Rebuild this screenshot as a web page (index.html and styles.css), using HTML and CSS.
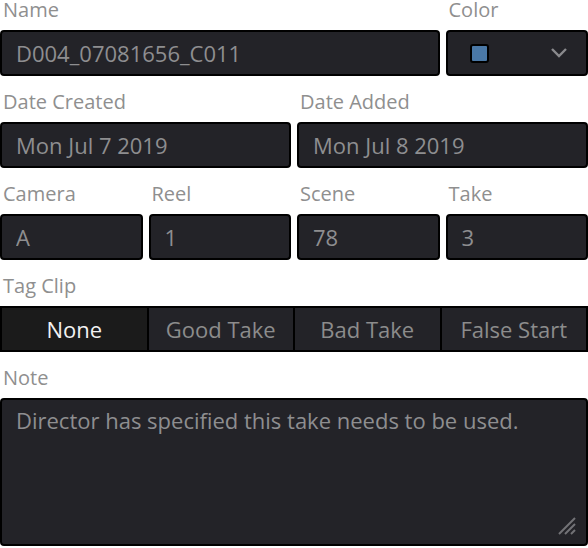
FILE: index.html
```html
<!DOCTYPE html>
<html>
<head>
<meta charset="utf-8">
<link rel="stylesheet" href="styles.css">
</head>
<body>
<form class="form">
  <div class="field span3">
    <label class="label">Name</label>
    <input class="input" value="D004_07081656_C011">
  </div>
  <div class="field">
    <label class="label">Color</label>
    <div class="input select">
      <span class="swatch"></span>
      <svg class="chev" width="18" height="12" viewBox="0 0 18 12"><path d="M2 2 L9 9 L16 2" fill="none" stroke="#8a8a8d" stroke-width="2.4"/></svg>
    </div>
  </div>
  <div class="field span2">
    <label class="label">Date Created</label>
    <input class="input" value="Mon Jul 7 2019">
  </div>
  <div class="field span2">
    <label class="label">Date Added</label>
    <input class="input" value="Mon Jul 8 2019">
  </div>
  <div class="field">
    <label class="label">Camera</label>
    <input class="input" value="A">
  </div>
  <div class="field">
    <label class="label">Reel</label>
    <input class="input" value="1">
  </div>
  <div class="field">
    <label class="label">Scene</label>
    <input class="input" value="78">
  </div>
  <div class="field">
    <label class="label">Take</label>
    <input class="input" value="3">
  </div>
  <div class="field span4">
    <label class="label">Tag Clip</label>
    <div class="seg">
      <button type="button" class="seg-btn active">None</button>
      <button type="button" class="seg-btn">Good Take</button>
      <button type="button" class="seg-btn">Bad Take</button>
      <button type="button" class="seg-btn">False Start</button>
    </div>
  </div>
  <div class="field span4">
    <label class="label">Note</label>
    <div class="area-wrap">
      <textarea class="input area">Director has specified this take needs to be used.</textarea>
      <svg class="grip" width="18" height="18" viewBox="0 0 18 18"><path d="M1 17 L17 1 M7 17 L17 7 M13 17 L17 13" fill="none" stroke="#727276" stroke-width="2"/></svg>
    </div>
  </div>
</form>
</body>
</html>
```

FILE: styles.css
```css
html, body {
  margin: 0;
  padding: 0;
  background: #ffffff;
}
body {
  font-family: "Open Sans", "Noto Sans", sans-serif;
  width: 588px;
  height: 548px;
  overflow: hidden;
}
.form {
  display: grid;
  grid-template-columns: repeat(4, 1fr);
  column-gap: 6px;
  row-gap: 16px;
  margin: 0;
}
.field {
  display: flex;
  flex-direction: column;
  min-width: 0;
}
.span2 { grid-column: span 2; }
.span3 { grid-column: span 3; }
.span4 { grid-column: span 4; }
.label {
  font-size: 20px;
  line-height: 20px;
  color: #8f8f8f;
  padding-left: 3px;
  margin-bottom: 10px;
  height: 20px;
}
.input {
  box-sizing: border-box;
  height: 46px;
  width: 100%;
  background: #232328;
  border: 2px solid #000;
  border-radius: 4px;
  color: #8e8e90;
  font-family: "Open Sans", "Noto Sans", sans-serif;
  font-size: 22px;
  padding: 0 14px;
  outline: none;
  margin: 0;
}
.select {
  display: flex;
  align-items: center;
  justify-content: space-between;
  padding: 0 18px 0 22px;
}
.swatch {
  width: 15px;
  height: 15px;
  background: #4a78a6;
  border: 2px solid #000;
  border-radius: 3px;
}
.chev {
  display: block;
}
.seg {
  display: flex;
  height: 46px;
  box-sizing: border-box;
  border: 2px solid #000;
  background: #000;
  gap: 2px;
}
.seg-btn {
  flex: 1;
  border: none;
  margin: 0;
  padding: 0;
  background: #232328;
  color: #8c8c8c;
  font-family: "Open Sans", "Noto Sans", sans-serif;
  font-size: 22px;
}
.seg-btn.active {
  background: #1b1b1b;
  color: #f2f2f2;
}
.area-wrap {
  position: relative;
}
.area {
  display: block;
  height: 148px;
  padding: 5px 14px;
  line-height: 30px;
  resize: none;
  border-radius: 4px;
}
.grip {
  position: absolute;
  right: 12px;
  bottom: 11px;
}
```
